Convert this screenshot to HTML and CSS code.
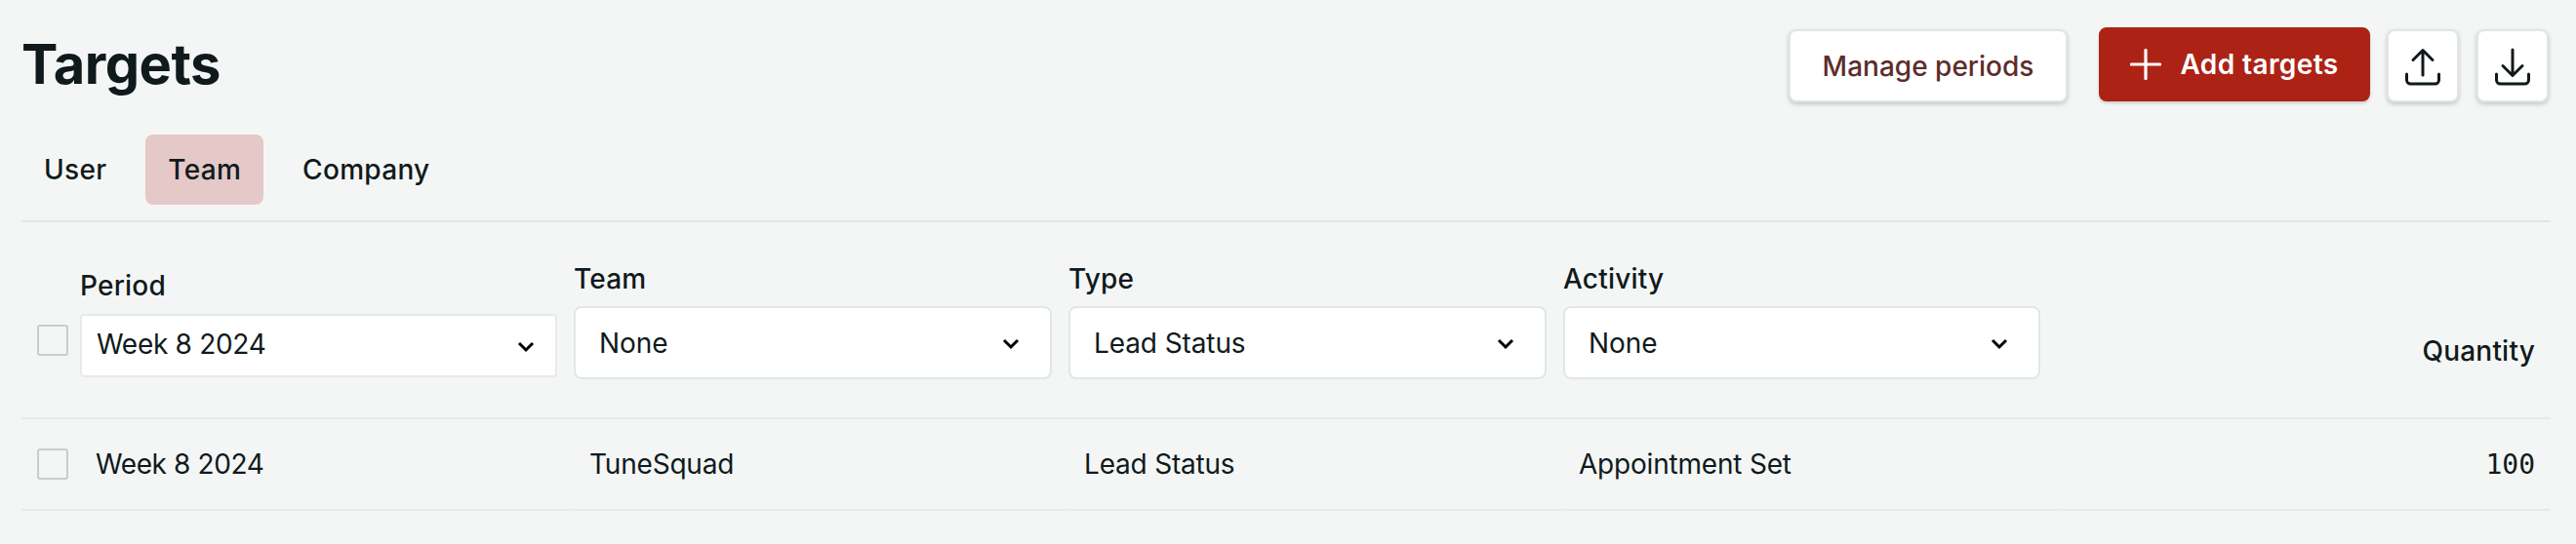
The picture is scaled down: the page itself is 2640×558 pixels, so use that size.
FILE: index.html
```html
<!DOCTYPE html>
<html lang="en">
<head>
<meta charset="utf-8">
<title>Targets</title>
<link rel="stylesheet" href="styles.css">
</head>
<body>
<main class="page">
  <header class="topbar">
    <h1 class="title">Targets</h1>
    <div class="actions">
      <button class="btn btn-manage">Manage periods</button>
      <button class="btn btn-add">
        <svg class="plus" viewBox="0 0 32 32" width="32" height="32"><path d="M16 1.5v29M1.5 16h29" fill="none" stroke="#fff" stroke-width="3.2" stroke-linecap="round"/></svg>
        Add targets
      </button>
      <button class="btn btn-icon" aria-label="Upload">
        <svg viewBox="0 0 40 40" width="40" height="40"><path d="M20 29V4M10 13.5 20 3.5l10 10M3.5 28v6a4 4 0 0 0 4 4h25a4 4 0 0 0 4-4v-6" fill="none" stroke="#101a1c" stroke-width="3" stroke-linecap="round" stroke-linejoin="round"/></svg>
      </button>
      <button class="btn btn-icon" aria-label="Download">
        <svg viewBox="0 0 40 40" width="40" height="40"><path d="M20 3v26M10 19.5l10 10 10-10M3.5 28v6a4 4 0 0 0 4 4h25a4 4 0 0 0 4-4v-6" fill="none" stroke="#101a1c" stroke-width="3" stroke-linecap="round" stroke-linejoin="round"/></svg>
      </button>
    </div>
  </header>

  <nav class="tabs">
    <a class="tab">User</a>
    <a class="tab tab-active">Team</a>
    <a class="tab">Company</a>
  </nav>

  <section class="grid head">
    <div class="cell cell-check"><span class="check"></span></div>
    <div class="cell cell-period">
      <label class="label">Period</label>
      <div class="select select-square"><span>Week 8 2024</span><svg class="chev" viewBox="0 0 18 12" width="18" height="12"><path d="M2 2l7 7 7-7" fill="none" stroke="#000" stroke-width="3"/></svg></div>
    </div>
    <div class="cell cell-filter">
      <label class="label">Team</label>
      <div class="select"><span>None</span><svg class="chev" viewBox="0 0 18 12" width="18" height="12"><path d="M2 2l7 7 7-7" fill="none" stroke="#000" stroke-width="3"/></svg></div>
    </div>
    <div class="cell cell-filter">
      <label class="label">Type</label>
      <div class="select"><span>Lead Status</span><svg class="chev" viewBox="0 0 18 12" width="18" height="12"><path d="M2 2l7 7 7-7" fill="none" stroke="#000" stroke-width="3"/></svg></div>
    </div>
    <div class="cell cell-filter">
      <label class="label">Activity</label>
      <div class="select"><span>None</span><svg class="chev" viewBox="0 0 18 12" width="18" height="12"><path d="M2 2l7 7 7-7" fill="none" stroke="#000" stroke-width="3"/></svg></div>
    </div>
    <div class="cell cell-qty label">Quantity</div>
  </section>

  <section class="grid row">
    <div class="rcell"><span class="check"></span></div>
    <div class="rcell rtext">Week 8 2024</div>
    <div class="rcell rtext">TuneSquad</div>
    <div class="rcell rtext">Lead Status</div>
    <div class="rcell rtext">Appointment Set</div>
    <div class="rcell rnum">100</div>
  </section>
</main>
</body>
</html>
```

FILE: styles.css
```css
* { box-sizing: border-box; }
html, body { margin: 0; padding: 0; }
body {
  background: #f4f6f5;
  color: #101a1c;
  font-family: Inter, "Liberation Sans", sans-serif;
  height: 558px;
  overflow: hidden;
}
.page { padding: 28px 26px 0 22px; }

.topbar { display: flex; justify-content: space-between; align-items: flex-start; height: 110px; }
.title { margin: 0; font-size: 56px; font-weight: 700; line-height: 76px; letter-spacing: -0.5px; }
.actions { display: flex; align-items: flex-start; margin-right: 2px; }

.btn {
  font: inherit;
  font-size: 28px;
  font-weight: 500;
  height: 75px;
  margin-top: 2px;
  border: 2px solid #dfe6e9;
  border-radius: 8px;
  background: #fff;
  box-shadow: 0 2px 4px rgba(16, 26, 28, 0.22);
  display: flex;
  align-items: center;
  justify-content: center;
  padding: 0;
}
.btn-manage { width: 286px; color: #5c2d2d; margin-right: 32px; }
.btn-add {
  width: 278px; height: 76px; margin-top: 0; margin-right: 17px;
  background: #ac2316; border-color: #ac2316; color: #fff; font-weight: 600; gap: 19px;
  letter-spacing: 0.4px;
  box-shadow: 0 2px 3px rgba(16, 26, 28, 0.18);
}
.btn-icon { width: 74px; }
.btn-icon + .btn-icon { margin-left: 18px; }
.plus { flex: none; }

.tabs { display: flex; gap: 17px; padding-bottom: 16px; border-bottom: 2px solid #e0e7ea; }
.tab {
  height: 72px; padding: 0 23px; border-radius: 8px;
  display: flex; align-items: center;
  font-size: 28px; font-weight: 500; letter-spacing: 0.3px;
}
.tab-active { background: #e5c8c8; }

.grid { display: grid; grid-template-columns: 60px 506px 507px 507px 506px 506px; }
.head { height: 202px; border-bottom: 2px solid #e7eaea; }
.label { display: block; font-size: 28px; font-weight: 500; line-height: 36px; letter-spacing: 0.2px; }
.cell-check { padding: 105px 0 0 16px; }
.cell-period { padding: 47px 17px 0 0; }
.cell-filter { padding: 40px 17px 0 0; }
.cell-period .label { margin-bottom: 11px; }
.cell-filter .label { margin-bottom: 10px; }
.cell-qty { padding: 114px 16px 0 0; text-align: right; }

.check {
  display: block; width: 32px; height: 32px;
  border: 2px solid #c9cdce; border-radius: 3px; background: #f4f6f5;
}
.select {
  height: 75px; border: 2px solid #e0e7ea; border-radius: 8px; background: #fff;
  display: flex; align-items: center; justify-content: space-between;
  padding: 0 31px 0 24px;
  font-size: 28px; line-height: 36px; letter-spacing: -0.1px;
}
.select-square {
  height: 65px; border-color: #e7eaea; border-radius: 4px; padding: 0 21px 0 15px;
  letter-spacing: -0.3px;
}
.select-square span { position: relative; bottom: 2px; }
.chev { flex: none; position: relative; top: 1px; }

.row { height: 94px; }
.rcell {
  height: 94px; border-bottom: 2px solid #e7eaea; border-radius: 0 0 2px 2px;
  display: flex; align-items: center;
}
.rcell:first-child { padding-left: 16px; }
.rtext { padding-left: 16px; font-size: 28px; line-height: 36px; letter-spacing: -0.2px; }
.rcell:nth-child(2) { letter-spacing: -0.4px; }
.rnum {
  justify-content: flex-end; padding-right: 16px;
  font-family: "DejaVu Sans Mono", monospace; font-size: 28px;
}
```
